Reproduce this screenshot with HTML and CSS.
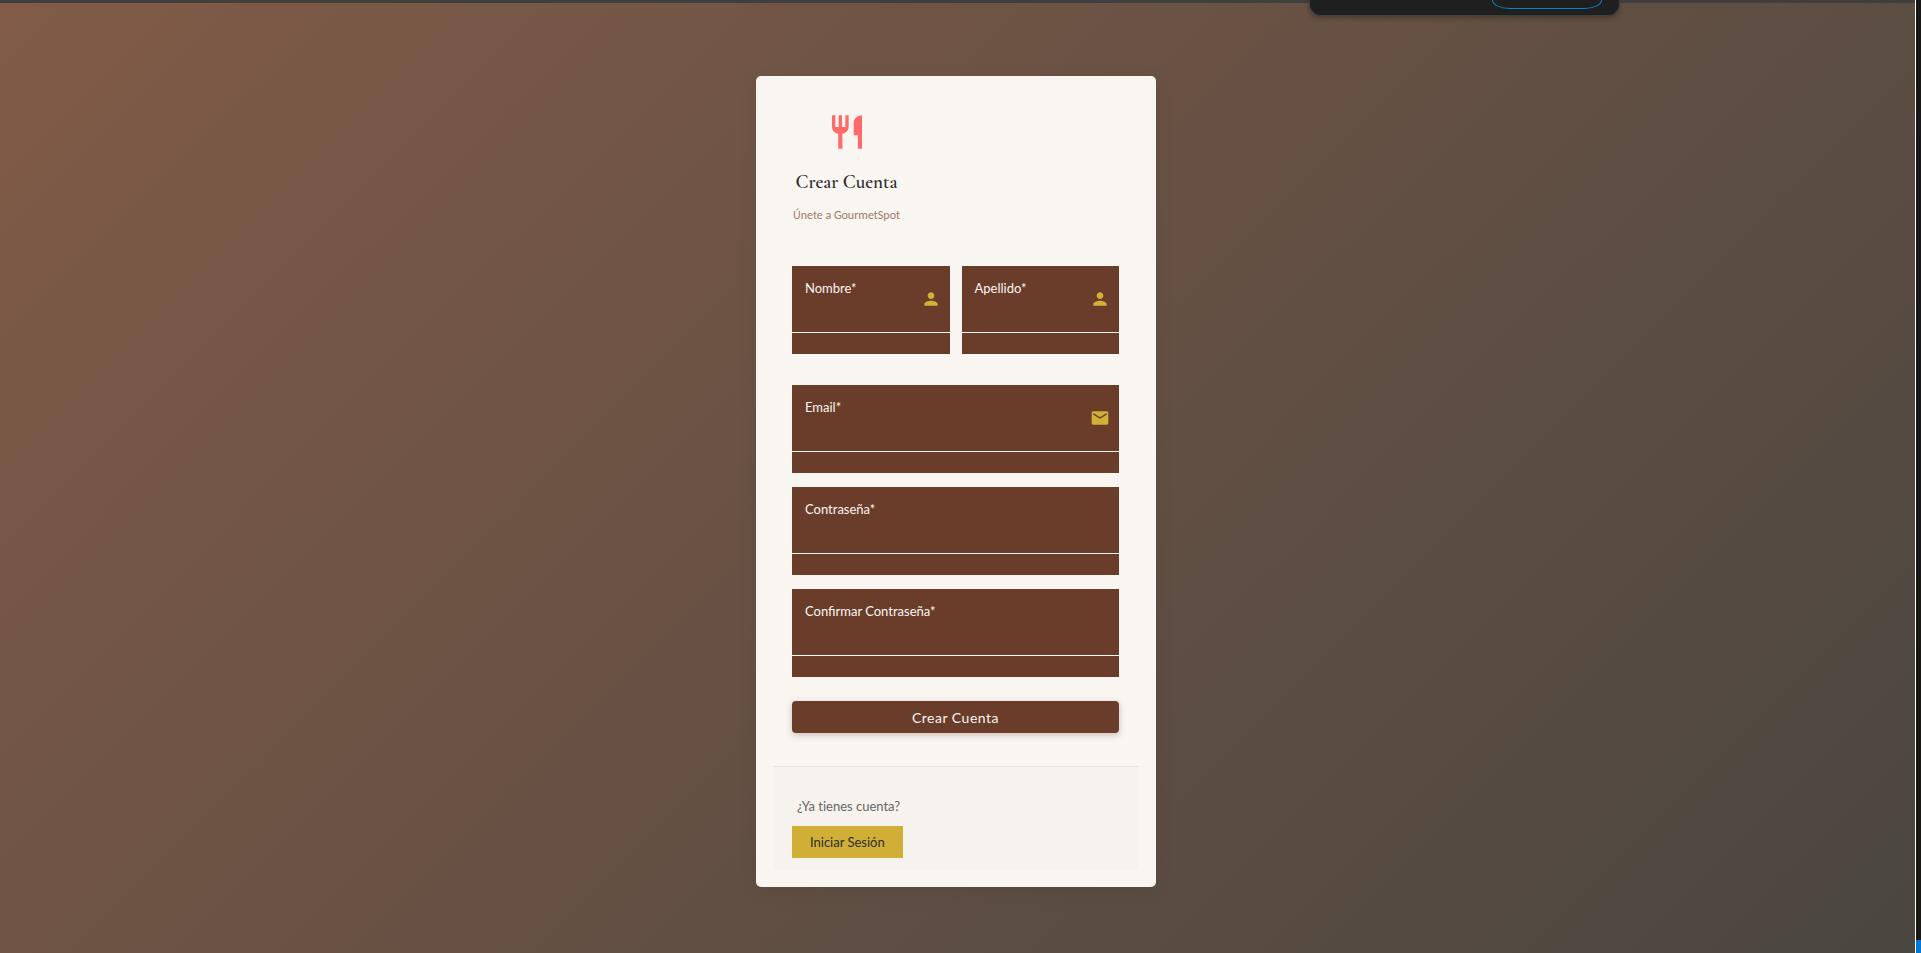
FILE: index.html
```html
<!DOCTYPE html>
<html lang="es">
<head>
<meta charset="utf-8">
<meta name="viewport" content="width=device-width, initial-scale=1">
<title>Crear Cuenta</title>
<link rel="stylesheet" href="styles.css">
</head>
<body>
<div class="frame">
  <main class="page">
    <section class="card">
      <header class="intro">
        <svg class="intro-icon" viewBox="0 0 24 24" aria-hidden="true"><path d="M11 9H9V2H7v7H5V2H3v7c0 2.12 1.66 3.84 3.75 3.97V22h2.5v-9.03C11.34 12.84 13 11.12 13 9V2h-2v7zm5-3v8h2.5v8H21V2c-2.76 0-5 2.24-5 4z"/></svg>
        <h1 class="title">Crear Cuenta</h1>
        <p class="subtitle">Únete a GourmetSpot</p>
      </header>
      <form class="form">
        <div class="row">
          <div class="field">
            <div class="box">
              <div class="entry">
                <label class="label" for="nombre">Nombre*</label>
                <input class="input" id="nombre" type="text">
              </div>
              <svg class="icon" viewBox="0 0 24 24" aria-hidden="true"><path d="M12 12c2.21 0 4-1.79 4-4s-1.790-4-4-4-4 1.790-4 4 1.790 4 4 4zm0 2c-2.670 0-8 1.340-8 4v2h16v-2c0-2.660-5.330-4-8-4z"/></svg>
            </div>
          </div>
          <div class="field">
            <div class="box">
              <div class="entry">
                <label class="label" for="apellido">Apellido*</label>
                <input class="input" id="apellido" type="text">
              </div>
              <svg class="icon" viewBox="0 0 24 24" aria-hidden="true"><path d="M12 12c2.210 0 4-1.790 4-4s-1.790-4-4-4-4 1.790-4 4 1.790 4 4 4zm0 2c-2.670 0-8 1.340-8 4v2h16v-2c0-2.660-5.330-4-8-4z"/></svg>
            </div>
          </div>
        </div>
        <div class="field">
          <div class="box">
            <div class="entry">
              <label class="label" for="email">Email*</label>
              <input class="input" id="email" type="email">
            </div>
            <svg class="icon" viewBox="0 0 24 24" aria-hidden="true"><path d="M20 4H4c-1.100 0-1.990.9-1.990 2L2 18c0 1.100.9 2 2 2h16c1.100 0 2-.9 2-2V6c0-1.100-.9-2-2-2zm0 4l-8 5-8-5V6l8 5 8-5v2z"/></svg>
          </div>
        </div>
        <div class="field">
          <div class="box">
            <div class="entry">
              <label class="label" for="clave">Contraseña*</label>
              <input class="input" id="clave" type="password">
            </div>
          </div>
        </div>
        <div class="field">
          <div class="box">
            <div class="entry">
              <label class="label" for="clave2">Confirmar Contraseña*</label>
              <input class="input" id="clave2" type="password">
            </div>
          </div>
        </div>
        <button class="submit" type="submit">Crear Cuenta</button>
      </form>
      <footer class="foot">
        <p class="question">¿Ya tienes cuenta?</p>
        <a class="login" href="#">Iniciar Sesión</a>
      </footer>
    </section>
  </main>
  <aside class="rail"><span class="rail-accent"></span></aside>
</div>
<div class="panel"><span class="pill"></span></div>
</body>
</html>
```
FILE: styles.css
```css
* { box-sizing: border-box; }

body {
  margin: 0;
  font-family: Lato, sans-serif;
  font-size: 13px;
  overflow: hidden;
}

.frame {
  display: flex;
  min-height: 100vh;
}

.page {
  flex: 1;
  display: flex;
  justify-content: center;
  align-items: flex-start;
  padding: 73px 3px 24px 0;
  border-top: 3px solid #3f3f3f;
  background: linear-gradient(135deg, #815b47, #4a4640);
}

.card {
  width: 400px;
  padding: 36px 17px 17px;
  border-radius: 5px;
  background: #f9f5f0;
  box-shadow: 0 4px 20px rgba(0, 0, 0, 0.06);
}

.intro {
  display: flex;
  flex-direction: column;
  align-items: center;
  width: max-content;
  margin-left: 20px;
}

.intro-icon {
  width: 40px;
  height: 40px;
  fill: #ff6b6b;
}

.title {
  margin: 16px 0 0;
  font-family: "Cormorant Garamond", "Liberation Serif", serif;
  font-size: 19px;
  font-weight: 600;
  line-height: 28px;
  color: #2c2c2c;
}

.subtitle {
  margin: 10px 0 0;
  font-family: Carlito, Lato, sans-serif;
  font-size: 12px;
  line-height: 18px;
  color: #a1796b;
}

.form {
  display: flex;
  flex-direction: column;
  gap: 14px;
  margin: 42px 20px 0 19px;
}

.row {
  display: grid;
  grid-template-columns: 1fr 1fr;
  gap: 12px;
  margin-bottom: 17px;
}

.field {
  padding-bottom: 21px;
  background: #6a3c2a;
}

.box {
  display: flex;
  align-items: center;
  height: 67px;
  padding: 0 9px 0 13px;
  border-bottom: 1px solid #faf6f1;
}

.entry {
  display: flex;
  flex: 1;
  flex-direction: column;
  min-width: 0;
  height: 100%;
  padding-top: 14px;
}

.label {
  line-height: 16px;
  color: #faf6f1;
}

.input {
  width: 100%;
  height: 28px;
  padding: 0;
  border: 0;
  outline: 0;
  background: transparent;
  color: #faf6f1;
  font: inherit;
}

.icon {
  flex: none;
  width: 20px;
  height: 20px;
  fill: #d4af37;
}

.submit {
  height: 32px;
  margin-top: 10px;
  border: 0;
  border-radius: 4px;
  background: #6a3c2a;
  box-shadow: 0 2px 6px rgba(106, 60, 42, 0.3);
  color: #faf6f1;
  font: 14px Lato, sans-serif;
  letter-spacing: 0.5px;
}

.foot {
  display: flex;
  flex-direction: column;
  align-items: flex-start;
  margin-top: 33px;
  padding: 30px 19px 12px;
  border-top: 1px solid #e8e4df;
  background: #f6f2ed;
}

.question {
  margin: 0 0 10px 5px;
  line-height: 19px;
  color: #666;
  font-variant-ligatures: none;
}

.login {
  padding: 0 18px;
  background: #d1af37;
  color: #2c2c2c;
  line-height: 32px;
  text-decoration: none;
}

.rail {
  display: flex;
  align-items: flex-end;
  width: 6px;
  border-left: 1px solid #fff;
  background: #1a1816;
}

.rail-accent {
  flex: 1;
  height: 13px;
  background: #0078d4;
}

.panel {
  position: absolute;
  top: 0;
  left: 1309px;
  display: flex;
  justify-content: flex-end;
  width: 311px;
  height: 16px;
  padding-right: 17px;
  border: 1px solid #3f3f3f;
  border-top: 0;
  border-radius: 0 0 12px 12px;
  background: #1f1f1f;
  box-shadow: 0 2px 5px rgba(0, 0, 0, 0.3);
}

.pill {
  width: 110px;
  height: 9px;
  border: 1px solid #0a84c4;
  border-top: 0;
  border-radius: 0 0 18px 18px / 0 0 9px 9px;
}
```
